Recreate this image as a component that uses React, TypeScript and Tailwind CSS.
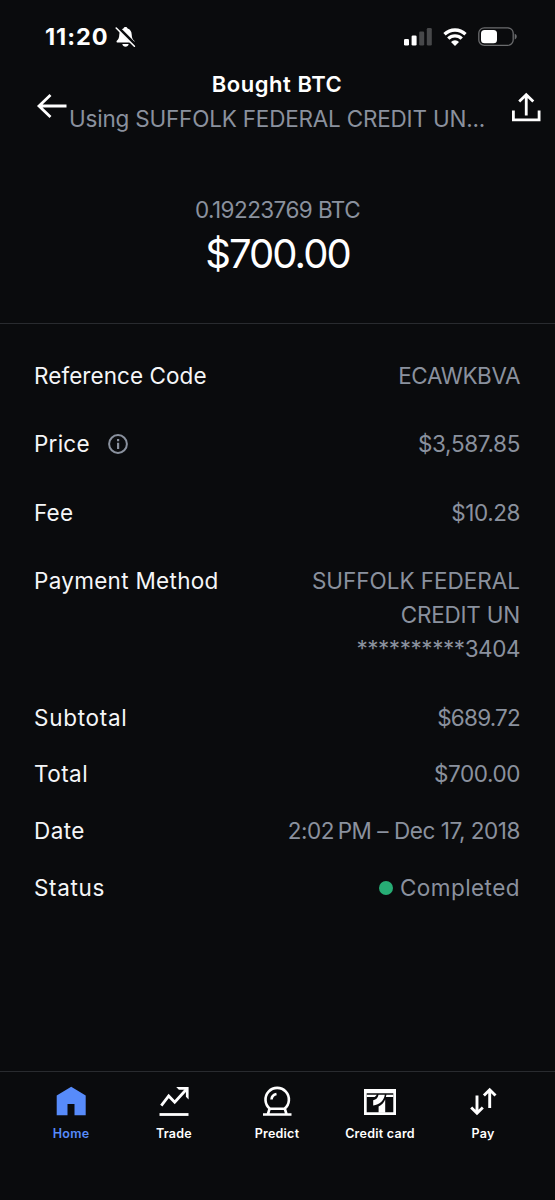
import type { ReactNode } from "react";

type Detail = {
  label: string;
  value: ReactNode;
  labelClass: string;
  valueClass: string;
  info?: boolean;
};

const details: Detail[] = [
  { label: "Reference Code", value: "ECAWKBVA", labelClass: "tracking-[0.003em]", valueClass: "tracking-[-0.02em]" },
  { label: "Price", value: "$3,587.85", labelClass: "tracking-[0.01em]", valueClass: "tracking-[-0.015em]", info: true },
  { label: "Fee", value: "$10.28", labelClass: "tracking-[0.01em]", valueClass: "tracking-[-0.02em]" },
  {
    label: "Payment Method",
    value: (
      <>
        <span className="block tracking-[-0.001em]">SUFFOLK FEDERAL</span>
        <span className="block tracking-[-0.01em]">CREDIT UN</span>
        <span className="block tracking-[-0.02em]">**********3404</span>
      </>
    ),
    labelClass: "tracking-[0.013em]",
    valueClass: "",
  },
];

const totals: Detail[] = [
  { label: "Subtotal", value: "$689.72", labelClass: "tracking-[0.032em]", valueClass: "tracking-[-0.035em]" },
  { label: "Total", value: "$700.00", labelClass: "tracking-[0.02em]", valueClass: "tracking-[-0.018em]" },
  { label: "Date", value: "2:02\u2009PM – Dec 17, 2018", labelClass: "tracking-[0.02em]", valueClass: "tracking-[-0.02em]" },
  {
    label: "Status",
    value: (
      <span className="flex items-center gap-[7px]">
        <span className="size-[14px] rounded-full bg-[#27ad75]" />
        Completed
      </span>
    ),
    labelClass: "tracking-[0.03em]",
    valueClass: "tracking-[0.02em]",
  },
];

function BellOffIcon() {
  return (
    <svg width="21" height="22" viewBox="0 0 21 22" className="ml-[7px]">
      <path
        d="M10.5 1c1.2 0 1.9.7 2.1 1.6 2.6.8 4 3 4.1 5.9.1 3.6 1 4.7 2.5 6.3.6.8.2 1.8-.9 1.8H2.7c-1.1 0-1.5-1-.9-1.8 1.5-1.6 2.4-2.7 2.5-6.3.1-2.9 1.5-5.1 4.1-5.9C8.6 1.700 9.300 1 10.500 1z"
        fill="#fff"
      />
      <path d="M7.300 18h6.400c-.4 1.700-1.600 2.700-3.200 2.700S7.700 19.700 7.300 18z" fill="#fff" />
      <path d="M2 .8 20.600 19.400" stroke="#0a0b0d" strokeWidth="3.6" />
      <path d="M1.200 2 19.400 20.200" stroke="#fff" strokeWidth="1.6" strokeLinecap="round" />
    </svg>
  );
}

function SignalIcon() {
  return (
    <svg width="28" height="20" viewBox="0 0 28 20">
      <rect x="0" y="12" width="5" height="6.5" rx="1.3" fill="#fff" />
      <rect x="7.6" y="8.5" width="5" height="10" rx="1.3" fill="#fff" />
      <rect x="15.2" y="4.5" width="5" height="14" rx="1.3" fill="#47484a" />
      <rect x="22.8" y="1" width="5" height="17.5" rx="1.3" fill="#47484a" />
    </svg>
  );
}

function WifiIcon() {
  return (
    <svg width="24" height="18" viewBox="0 0 24 18" fill="none" stroke="#fff" strokeWidth="3.3">
      <path d="M1.500 6.300a15 15 0 0 1 21 0" />
      <path d="M5.300 10.700a9.400 9.400 0 0 1 13.400 0" />
      <path d="M12 18 8 14a5.600 5.600 0 0 1 8 0z" fill="#fff" stroke="none" />
    </svg>
  );
}

function BatteryIcon() {
  return (
    <svg width="39" height="20" viewBox="0 0 39 20">
      <rect x=".8" y=".8" width="34.4" height="17.6" rx="5.5" fill="none" stroke="#6b6c6e" strokeWidth="1.3" />
      <rect x="3" y="3" width="16" height="13.2" rx="3.5" fill="#fff" />
      <path d="M36.700 6.800c1.300.4 2 1.500 2 2.800s-.7 2.400-2 2.800z" fill="#6b6c6e" />
    </svg>
  );
}

function StatusBar() {
  return (
    <div className="flex h-[67px] items-center pt-[7px] pl-[45px] pr-[38px] text-white">
      <span className="text-[23.5px] leading-none font-bold tracking-[0.04em]">11:20</span>
      <BellOffIcon />
      <div className="ml-auto flex items-center gap-[11px]">
        <SignalIcon />
        <WifiIcon />
        <BatteryIcon />
      </div>
    </div>
  );
}

function Header() {
  return (
    <header className="flex h-[69px] text-white">
      <button className="w-[69px] pt-[9px] pl-[35.5px]" aria-label="Back">
        <svg width="31" height="26" viewBox="0 0 31 26" fill="none" stroke="#fff" strokeWidth="2.8">
          <path d="M30.500 13H3M14.500 2 3 13l11.500 11" />
        </svg>
      </button>
      <div className="flex-1 text-center leading-[34.5px] whitespace-nowrap">
        <h1 className="text-[22px] font-semibold tracking-[0.025em]">Bought BTC</h1>
        <p className="text-[22.5px] tracking-[-0.009em] text-[#8a919e]">Using SUFFOLK FEDERAL CREDIT UN...</p>
      </div>
      <button className="w-[70px] pt-[10px] pl-[27px]" aria-label="Share">
        <svg width="29" height="30" viewBox="0 0 29 30" fill="none" stroke="#fff" strokeWidth="2.8">
          <path d="M1.400 18.500v9.300h25.700v-9.300" />
          <path d="M14.250 23.500V3.500M7.200 9.500l7.050-6.700 7.050 6.700" />
        </svg>
      </button>
    </header>
  );
}

function InfoIcon() {
  return (
    <svg width="20" height="20" viewBox="0 0 20 20" className="ml-[18.5px]">
      <circle cx="10" cy="10" r="8.9" fill="none" stroke="#8a919e" strokeWidth="2" />
      <path d="M9 5h2.200v2.200H9zM9 8.700h2.200V15H9z" fill="#8a919e" />
    </svg>
  );
}

function DetailRow({ label, value, labelClass, valueClass, info }: Detail) {
  return (
    <div className="flex items-start justify-between">
      <div className="flex items-center text-[#f5f6f8]">
        <span className={labelClass}>{label}</span>
        {info && <InfoIcon />}
      </div>
      <div className={`text-right text-[#8a919e] ${valueClass}`}>{value}</div>
    </div>
  );
}

function HomeIcon() {
  return (
    <svg width="32" height="32" viewBox="0 0 32 32">
      <path d="M1.700 10.500 16.200 1.700l14.500 8.800v19.800H19.500V19h-7v11.300H1.700z" fill="#578bfa" />
    </svg>
  );
}

function TradeIcon() {
  return (
    <svg width="32" height="32" viewBox="0 0 32 32" fill="none" stroke="#fff" strokeWidth="2.8">
      <path d="M3.300 20.700 10.700 11l6 6.200L28.500 4.200" />
      <path d="M30.600 2v12.400l-2.700-2.700V4.700h-7L18.200 2z" fill="#fff" stroke="none" />
      <path d="M1.500 29.500h29" />
    </svg>
  );
}

function PredictIcon() {
  return (
    <svg width="32" height="32" viewBox="0 0 32 32" fill="none" stroke="#fff" strokeWidth="2.6">
      <path d="M9 23.800a11.700 11.700 0 1 1 14.400 0z" />
      <path d="M10.500 14.500a6 6 0 0 1 5-5.500" />
      <path d="M8.500 24 6.800 29.500M23.900 24l1.700 5.500M2 29.500h28.500" />
    </svg>
  );
}

function CreditCardIcon() {
  return (
    <svg width="32" height="32" viewBox="0 0 32 32" fill="#fff">
      <path d="M0 4h32v26H0zM2.700 8.300v19h26.600v-19z" fillRule="evenodd" />
      <path d="M2.700 9.800h10.100c-.6.900-1.300 1.600-2.200 2.200H2.700zM22.400 9.800h6.900V12h-7.400z" />
      <path d="M14.500 9.800h6.300c-.9 6-5 10.100-11.600 10.600v-5.200c3-.4 4.800-2.400 5.300-5.400z" />
      <path d="M21.200 14.500v13.200h-6.600v-6.200c3-1.400 5.200-3.800 6.600-7z" />
    </svg>
  );
}

function PayIcon() {
  return (
    <svg width="32" height="32" viewBox="0 0 32 32" fill="none" stroke="#fff" strokeWidth="2.9">
      <path d="M10 10.500v18M4.200 22.500l5.800 5.800 5.800-5.800" />
      <path d="M22.700 23V5M16.900 10.500l5.800-5.800 5.800 5.800" />
    </svg>
  );
}

const tabs = [
  { label: "Home", icon: <HomeIcon />, color: "text-[#578bfa]" },
  { label: "Trade", icon: <TradeIcon />, color: "text-white" },
  { label: "Predict", icon: <PredictIcon />, color: "text-white" },
  { label: "Credit card", icon: <CreditCardIcon />, color: "text-white" },
  { label: "Pay", icon: <PayIcon />, color: "text-white" },
];

function TabBar() {
  return (
    <nav className="h-[129px] border-t border-[#292b2f] px-[19.5px] pt-[13px]">
      <div className="grid grid-cols-[repeat(5,103px)]">
        {tabs.map((t) => (
          <button key={t.label} className={`flex flex-col items-center ${t.color}`}>
            {t.icon}
            <span className="mt-[8px] text-[12.5px] leading-[18px] font-semibold tracking-[0.02em]">{t.label}</span>
          </button>
        ))}
      </div>
    </nav>
  );
}

export default function App() {
  return (
    <div className="flex h-[1200px] w-[555px] flex-col overflow-hidden bg-[#0a0b0d] font-['Inter',sans-serif]">
      <StatusBar />
      <Header />
      <section className="flex h-[188px] flex-col items-center border-b border-[#292b2f] pt-[57px]">
        <p className="text-[22.5px] leading-[34px] tracking-[-0.025em] text-[#8a919e]">0.19223769 BTC</p>
        <p className="text-[40px] leading-[53px] tracking-[-0.048em] text-white">$700.00</p>
      </section>
      <main className="flex-1 pt-[35px] pr-[35px] pl-[34px] text-[22.5px] leading-[34.15px]">
        <div className="flex flex-col gap-[34.15px]">
          {details.map((d) => (
            <DetailRow key={d.label} {...d} />
          ))}
        </div>
        <div className="mt-[34.15px] flex flex-col gap-[22.8px]">
          {totals.map((d) => (
            <DetailRow key={d.label} {...d} />
          ))}
        </div>
      </main>
      <TabBar />
    </div>
  );
}
